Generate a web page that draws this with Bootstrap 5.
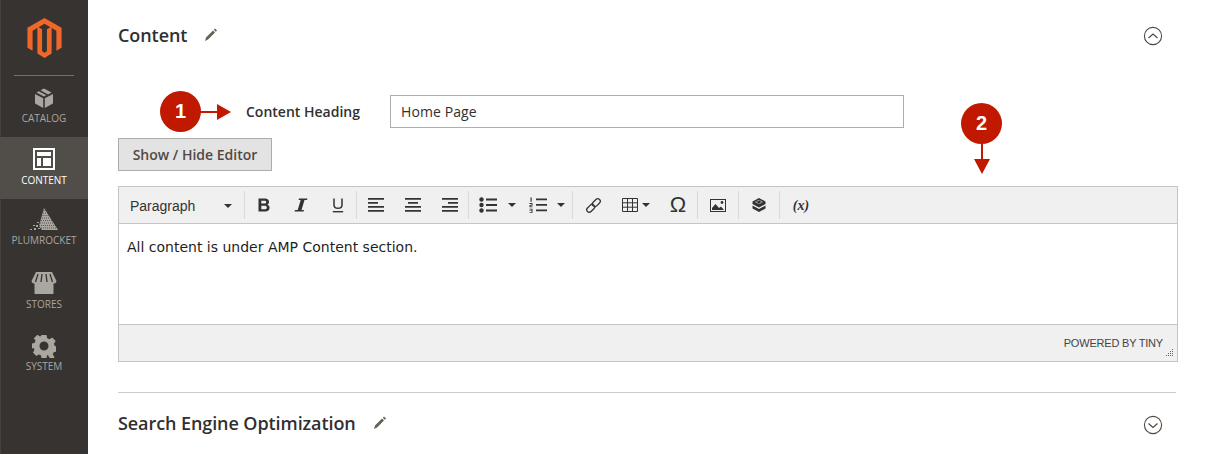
<!doctype html>
<html lang="en"><head><meta charset="utf-8"><title>Content</title>
<link rel="stylesheet" href="https://cdn.jsdelivr.net/npm/bootstrap@5.3.0/dist/css/bootstrap.min.css">
<style>
html,body{height:454px;overflow:hidden;background:#fff}
body{font-family:"Open Sans",sans-serif;color:#303030}
.shell{height:454px}
.side{width:88px;background:#373330;border-left:1px solid #45413e;flex:none}
.logo-wrap{height:76px;padding-top:18px}
.logo-svg{display:block;margin-left:26px}
.logo-line{width:60px;height:1px;background:#736e6a;margin:17px auto 0 13px}
.side-item{height:62px;color:#aaa6a0;font-size:10px;line-height:12px;text-align:center;padding-top:10px;margin-left:-1px}
.side-item svg{display:block;margin:0 auto 3px;height:24px}
.side-item.cat{height:61px}
.side-item.cat svg{margin-bottom:2px}
.side-item.on{background:#514d49;color:#fff}
.side-item.pr{height:60px;padding-top:8px}
.side-item.pr svg{margin-bottom:3px}
.side-item.st{padding-top:12px}
.side-item.sy{padding-top:13px}
.side-item.sy svg{margin-bottom:2px}
.main-col{padding-left:30px;width:1090px;position:relative;flex:none}
.sec-head{height:70px;padding-top:24px}
.sec-title{font-size:18px;font-weight:600;line-height:22px;color:#303030;letter-spacing:-.08px}
.pencil{margin-left:17px}
.round-ico{margin-left:auto;margin-right:15px}
.ico-up{margin-top:1px}
.ico-down{margin-top:2px}
.field-row{margin-left:128px;height:33px;margin-top:25px}
.field-label{font-size:14px;font-weight:600;width:144px;line-height:33px;color:#303030}
.field-input{width:514px;height:33px;border:1px solid #adadad;padding:0 10px;font-size:14px;line-height:31px;color:#303030;letter-spacing:.1px}
.tog{margin-top:10px;height:33px;width:154px;border:1px solid #adadad;background:#e3e3e3;color:#514943;font-size:14px;font-weight:600;line-height:31px;text-align:center;border-radius:0;padding:0;display:block}
.tog:hover{background:#e3e3e3;border-color:#adadad;color:#514943}
.editor{margin-top:15px;width:1060px;height:176px;border:1px solid #c5c5c5;border-bottom-width:2px}
.tbar{height:37px;background:#f0f0f0;border-bottom:1px solid #c5c5c5;padding-top:4px}
.tgroup{height:28px;border-right:1px solid #d9d9d9;flex:none}
.tgroup.last{border-right:0}
.para{width:126px;font-family:"Liberation Sans",sans-serif;font-size:14px;line-height:30px;color:#333;padding-left:11px;position:relative}
.para i{position:absolute;left:105px;top:13px;border:4px solid transparent;border-top-color:#333;border-bottom:0}
.tbtn{height:28px;flex:none;color:#333}
.w37{width:37px}
.w41{width:41px}
.w42{width:42px}
.w104{width:104px}
.w125{width:125px}
.bul{width:56px;padding-left:10px}
.num{width:47px;padding-left:4px}
.tab{width:42px;padding-left:8px}
.cm{margin-left:11px}
.cn{margin-left:10px}
.omega{width:40px;padding-left:4px;font-family:"Liberation Sans",sans-serif;font-size:22px;line-height:1}
.varx{font-family:"Liberation Serif",serif;font-style:italic;font-weight:700;font-size:14px}
.ebody{height:100px;background:#fff;padding:13px 8px;font-family:"DejaVu Sans",sans-serif;font-size:14px;line-height:20px;color:#1f1f1f}
.estatus{height:37px;background:#f0f0f0;border-top:1px solid #c5c5c5;font-family:"Liberation Sans",sans-serif;font-size:11px;letter-spacing:-.2px;color:#444;padding:11px 14px 0 0;line-height:14px;position:relative}
.grip{position:absolute;right:3px;bottom:3px}
.sep-line{border-top:1px solid #cccccc;margin-top:30px;width:1058px}
.sec-two{padding-top:19px}
.callout{position:absolute;color:#fff;background:#c11800;width:41px;height:41px;border-radius:50%;font-family:"Liberation Sans",sans-serif;font-weight:700;font-size:20px;line-height:41px;text-align:center}
.c1{left:72px;top:91px}
.c2{left:873px;top:103px}
.arrow{position:absolute}
.a1{left:112px;top:103px}
.a2{left:885px;top:144px}
</style></head><body>
<div class="shell d-flex">
<nav class="side">
 <div class="logo-wrap">
  <svg class="logo-svg" width="35" height="40" viewBox="0 0 35 41"><path fill="#f1672a" d="M17.500 0 35 10v20.500l-5.300 3V13L17.500 6 5.300 13v20.500L0 30.500V10z"/><path fill="#f1672a" d="M15 11.500V34l2.500 1.500L20 34V11.500l4.800-2.800V36.500L17.500 41l-7.300-4.500V8.700z"/></svg>
  <div class="logo-line"></div>
 </div>
 <div class="side-item cat"><svg width="24" height="24" viewBox="0 0 24 24"><path fill="#aaa6a0" d="M12 2.500 8.500 4.300 16 8.400l3.500-1.900zM6.800 5.200 4.500 6.400l7.500 4.100 2.300-1.200zM3 8v9.500l8.200 4.500v-9.700zM21 8l-8.200 4.300V22l8.200-4.500z"/></svg>CATALOG</div>
 <div class="side-item on"><svg width="24" height="24" viewBox="0 0 24 24"><path fill="#fff" d="M1 1h22v22H1zm2 2v18h18V3zm2 2h14v4H5zm0 6h4v8H5zm6 0h8v8h-8z" fill-rule="evenodd"/></svg>CONTENT</div>
 <div class="side-item pr"><svg width="30" height="24" viewBox="0 0 30 24"><path fill="#aaa6a0" d="M15 1 29 23H13l-3-4z"/><path stroke="#373330" stroke-width=".7" stroke-dasharray="1 1" fill="none" d="M8 21h21M10 18.500h17M11 16h15M12 13.500h12.500M13 11h10M13.500 8.500h8M14 6h5.500M14.500 3.500h3"/><g fill="#aaa6a0"><rect x="1" y="22" width="2" height="1"/><rect x="5" y="21" width="2" height="2"/><rect x="9" y="21" width="2" height="1"/><rect x="4" y="18" width="2" height="1"/><rect x="7" y="18" width="2" height="2"/><rect x="8" y="15" width="2" height="1"/></g></svg>PLUMROCKET</div>
 <div class="side-item st"><svg width="26" height="24" viewBox="0 0 26 24"><path fill="#aaa6a0" d="M5 1h16l4.500 9c0 2-2 2.500-3 2.500V23h-19V12.500c-1 0-3-.5-3-2.500z"/><path stroke="#373330" stroke-width="1.300" d="M7 3 4.500 11M11 3l-1 8M15 3l1 8M19 3l2.500 8"/></svg>STORES</div>
 <div class="side-item sy"><svg width="24" height="24" viewBox="0 0 24 24"><path fill="#aaa6a0" fill-rule="evenodd" d="M9.500 1h5l.7 3.300 2.200.9 2.800-1.800 3.500 3.500-1.800 2.800.9 2.200 2.200.6v5l-3.300.7-.9 2.200 1.800 2.800-3.500 3.500L16 21.100l-1 .4-.5 2.500h-5l-.6-2.700-2.100-.9-2.400 1.600-3.500-3.500 1.600-2.500-.9-2.100L0 14.500v-5l2.600-.6.9-2.100-1.600-2.500 3.500-3.500 2.500 1.600 1-.5zM12 7.500a4.500 4.500 0 1 0 0 9 4.500 4.500 0 0 0 0-9z"/></svg>SYSTEM</div>
</nav>
<main class="main-col">
 <div class="sec-head d-flex align-items-start">
  <span class="sec-title">Content</span>
  <svg class="pencil" width="14" height="22" viewBox="0 0 14 22"><path fill="#676056" d="M11 4.500 13 6.500 11.800 7.700 9.800 5.700zM9 6.500l2 2L4 15.500 1 17l1-3.500z"/></svg>
  <svg class="round-ico ico-up" width="20" height="22" viewBox="0 0 20 22"><circle cx="10" cy="11" r="8.600" fill="none" stroke="#514943" stroke-width="1.100"/><path fill="none" stroke="#514943" stroke-width="1.200" d="M5.500 13 10 9l4.500 4"/></svg>
 </div>
 <div class="field-row d-flex">
  <label class="field-label">Content Heading</label>
  <div class="field-input">Home Page</div>
 </div>
 <button type="button" class="btn tog">Show / Hide Editor</button>
 <div class="editor">
  <div class="tbar d-flex">
   <div class="tgroup para">Paragraph<i></i></div>
   <div class="tgroup d-flex">
    <div class="tbtn w37 d-flex align-items-center justify-content-center"><svg width="14" height="16" viewBox="0 0 14 16"><path fill="#333" fill-rule="evenodd" d="M1.500 1.500H8c2.500 0 4 1.300 4 3.400 0 1.300-.7 2.300-1.700 2.800 1.400.4 2.300 1.500 2.300 3.100 0 2.400-1.700 3.700-4.300 3.700H1.500zM4.300 3.700v2.900h3.200c1 0 1.700-.5 1.700-1.500s-.7-1.400-1.700-1.400zm0 5v3.500h3.600c1.200 0 1.900-.6 1.900-1.800S9 8.700 7.800 8.700z"/></svg></div>
    <div class="tbtn w37 d-flex align-items-center justify-content-center"><svg width="14" height="16" viewBox="0 0 14 16"><path fill="#333" d="M5 1.500h8.500L13 3H10.500L7.500 13H10l-.5 1.500H.5L1 13h2.700L6.700 3H4.500z"/></svg></div>
    <div class="tbtn w37 d-flex align-items-center justify-content-center"><svg width="14" height="16" viewBox="0 0 14 16"><path fill="none" stroke="#333" stroke-width="1.500" d="M3 1.500v6.200c0 2.400 1.500 3.600 4 3.600s4-1.200 4-3.600V1.500"/><path fill="#333" d="M1.800 14h10.400v1.400H1.800z"/></svg></div>
   </div>
   <div class="tgroup d-flex">
    <div class="tbtn w37 d-flex align-items-center justify-content-center"><svg width="18" height="14" viewBox="0 0 18 14"><path fill="#333" d="M1 0h16v1.700H1zM1 4h10v1.700H1zM1 8h16v1.700H1zM1 12h16v1.700H1z"/></svg></div>
    <div class="tbtn w37 d-flex align-items-center justify-content-center"><svg width="18" height="14" viewBox="0 0 18 14"><path fill="#333" d="M1 0h16v1.700H1zM4 4h10v1.700H4zM1 8h16v1.700H1zM1 12h16v1.700H1z"/></svg></div>
    <div class="tbtn w37 d-flex align-items-center justify-content-center"><svg width="18" height="14" viewBox="0 0 18 14"><path fill="#333" d="M1 0h16v1.700H1zM7 4h10v1.700H7zM1 8h16v1.700H1zM1 12h16v1.700H1z"/></svg></div>
   </div>
   <div class="tgroup d-flex w104">
    <div class="tbtn bul d-flex align-items-center"><svg width="18" height="16" viewBox="0 0 18 16"><g fill="#333"><circle cx="2.500" cy="2.500" r="2.200"/><circle cx="2.500" cy="8" r="2.200"/><circle cx="2.500" cy="13.500" r="2.200"/><path d="M7 1.500h11v2H7zM7 7h11v2H7zM7 12.500h11v2H7z"/></g></svg><svg class="cm" width="8" height="4" viewBox="0 0 8 4"><path fill="#333" d="M0 0h8L4 4z"/></svg></div>
    <div class="tbtn num d-flex align-items-center"><svg width="18" height="16" viewBox="0 0 18 16"><g fill="#333"><path d="M7 1.500h11v1.800H7zM7 7h11v1.800H7zM7 12.500h11v1.800H7zM1.500.5h1.200v4.300H1.500zM.5 6h3v2.700h-2v.8h2v.8h-3V7.900h2v-1h-2zM.5 11.700h3v4h-3v-.8h2v-.8h-2v-.7h2v-.9h-2z"/></g></svg><svg class="cn" width="8" height="4" viewBox="0 0 8 4"><path fill="#333" d="M0 0h8L4 4z"/></svg></div>
   </div>
   <div class="tgroup d-flex w125">
    <div class="tbtn w41 d-flex align-items-center justify-content-center"><svg width="17" height="17" viewBox="0 0 17 17"><g fill="none" stroke="#333" stroke-width="1.300" transform="rotate(-45 8.500 8.500)"><rect x="0" y="6" width="9" height="5" rx="2.500"/><rect x="8" y="6" width="9" height="5" rx="2.500"/></g></svg></div>
    <div class="tbtn tab d-flex align-items-center"><svg width="16" height="14" viewBox="0 0 16 14"><path fill="none" stroke="#333" d="M.5.500h15v13H.500zM.5 4.800h15M.5 9.200h15M5.500.5v13M10.500.5v13"/></svg><svg class="ms-1" width="8" height="4" viewBox="0 0 8 4"><path fill="#333" d="M0 0h8L4 4z"/></svg></div>
    <div class="tbtn omega d-flex align-items-center justify-content-center">Ω</div>
   </div>
   <div class="tgroup w41"><div class="tbtn d-flex align-items-center justify-content-center"><svg width="16" height="13" viewBox="0 0 16 13"><path fill="#333" fill-rule="evenodd" d="M0 0h16v13H0zm1 1v11h14V1z"/><path fill="#333" d="M2 11V9l3.500-4 3.500 4 2-1.500 3 3.500z"/><circle fill="#333" cx="12" cy="3.500" r="1.400"/></svg></div></div>
   <div class="tgroup w41"><div class="tbtn d-flex align-items-center justify-content-center"><svg width="14" height="14" viewBox="0 0 14 14"><path fill="#333" d="M7 0l6.500 3.500V6L7 9.500.5 6V3.500zM.5 7.500 7 11l6.500-3.500v3L7 14 .5 10.500z"/><path fill="none" stroke="#f0f0f0" stroke-width=".8" stroke-dasharray="1 .6" d="M3.500 4 7 2.200 10.500 4 7 5.800z"/></svg></div></div>
   <div class="tgroup last w42"><div class="tbtn varx d-flex align-items-center justify-content-center">(x)</div></div>
  </div>
  <div class="ebody">All content is under AMP Content section.</div>
  <div class="estatus text-end">POWERED BY TINY
   <svg class="grip" width="9" height="9" viewBox="0 0 9 9"><g fill="#666"><rect x="7" y="0" width="1" height="1"/><rect x="5" y="2" width="1" height="1"/><rect x="7" y="2" width="1" height="1"/><rect x="3" y="4" width="1" height="1"/><rect x="5" y="4" width="1" height="1"/><rect x="7" y="4" width="1" height="1"/><rect x="1" y="6" width="1" height="1"/><rect x="3" y="6" width="1" height="1"/><rect x="5" y="6" width="1" height="1"/><rect x="7" y="6" width="1" height="1"/></g></svg>
  </div>
 </div>
 <div class="sep-line"></div>
 <div class="sec-two d-flex align-items-start">
  <span class="sec-title">Search Engine Optimization</span>
  <svg class="pencil" width="14" height="22" viewBox="0 0 14 22"><path fill="#676056" d="M11 4.500 13 6.500 11.800 7.700 9.800 5.700zM9 6.500l2 2L4 15.500 1 17l1-3.500z"/></svg>
  <svg class="round-ico ico-down" width="20" height="22" viewBox="0 0 20 22"><circle cx="10" cy="11" r="8.600" fill="none" stroke="#514943" stroke-width="1.100"/><path fill="none" stroke="#514943" stroke-width="1.200" d="M5.500 9.500 10 13.500l4.500-4"/></svg>
 </div>
 <div class="callout c1">1</div>
 <svg class="arrow a1" width="32" height="18" viewBox="0 0 32 18"><path fill="#c11800" d="M0 8h17V1l14 8-14 8v-7H0z"/></svg>
 <div class="callout c2">2</div>
 <svg class="arrow a2" width="18" height="31" viewBox="0 0 18 31"><path fill="#c11800" d="M8 0h2v15h7l-8 15-8-15h7z"/></svg>
</main>
</div>
<script src="https://cdn.jsdelivr.net/npm/bootstrap@5.3.0/dist/js/bootstrap.bundle.min.js"></script>
</body></html>
